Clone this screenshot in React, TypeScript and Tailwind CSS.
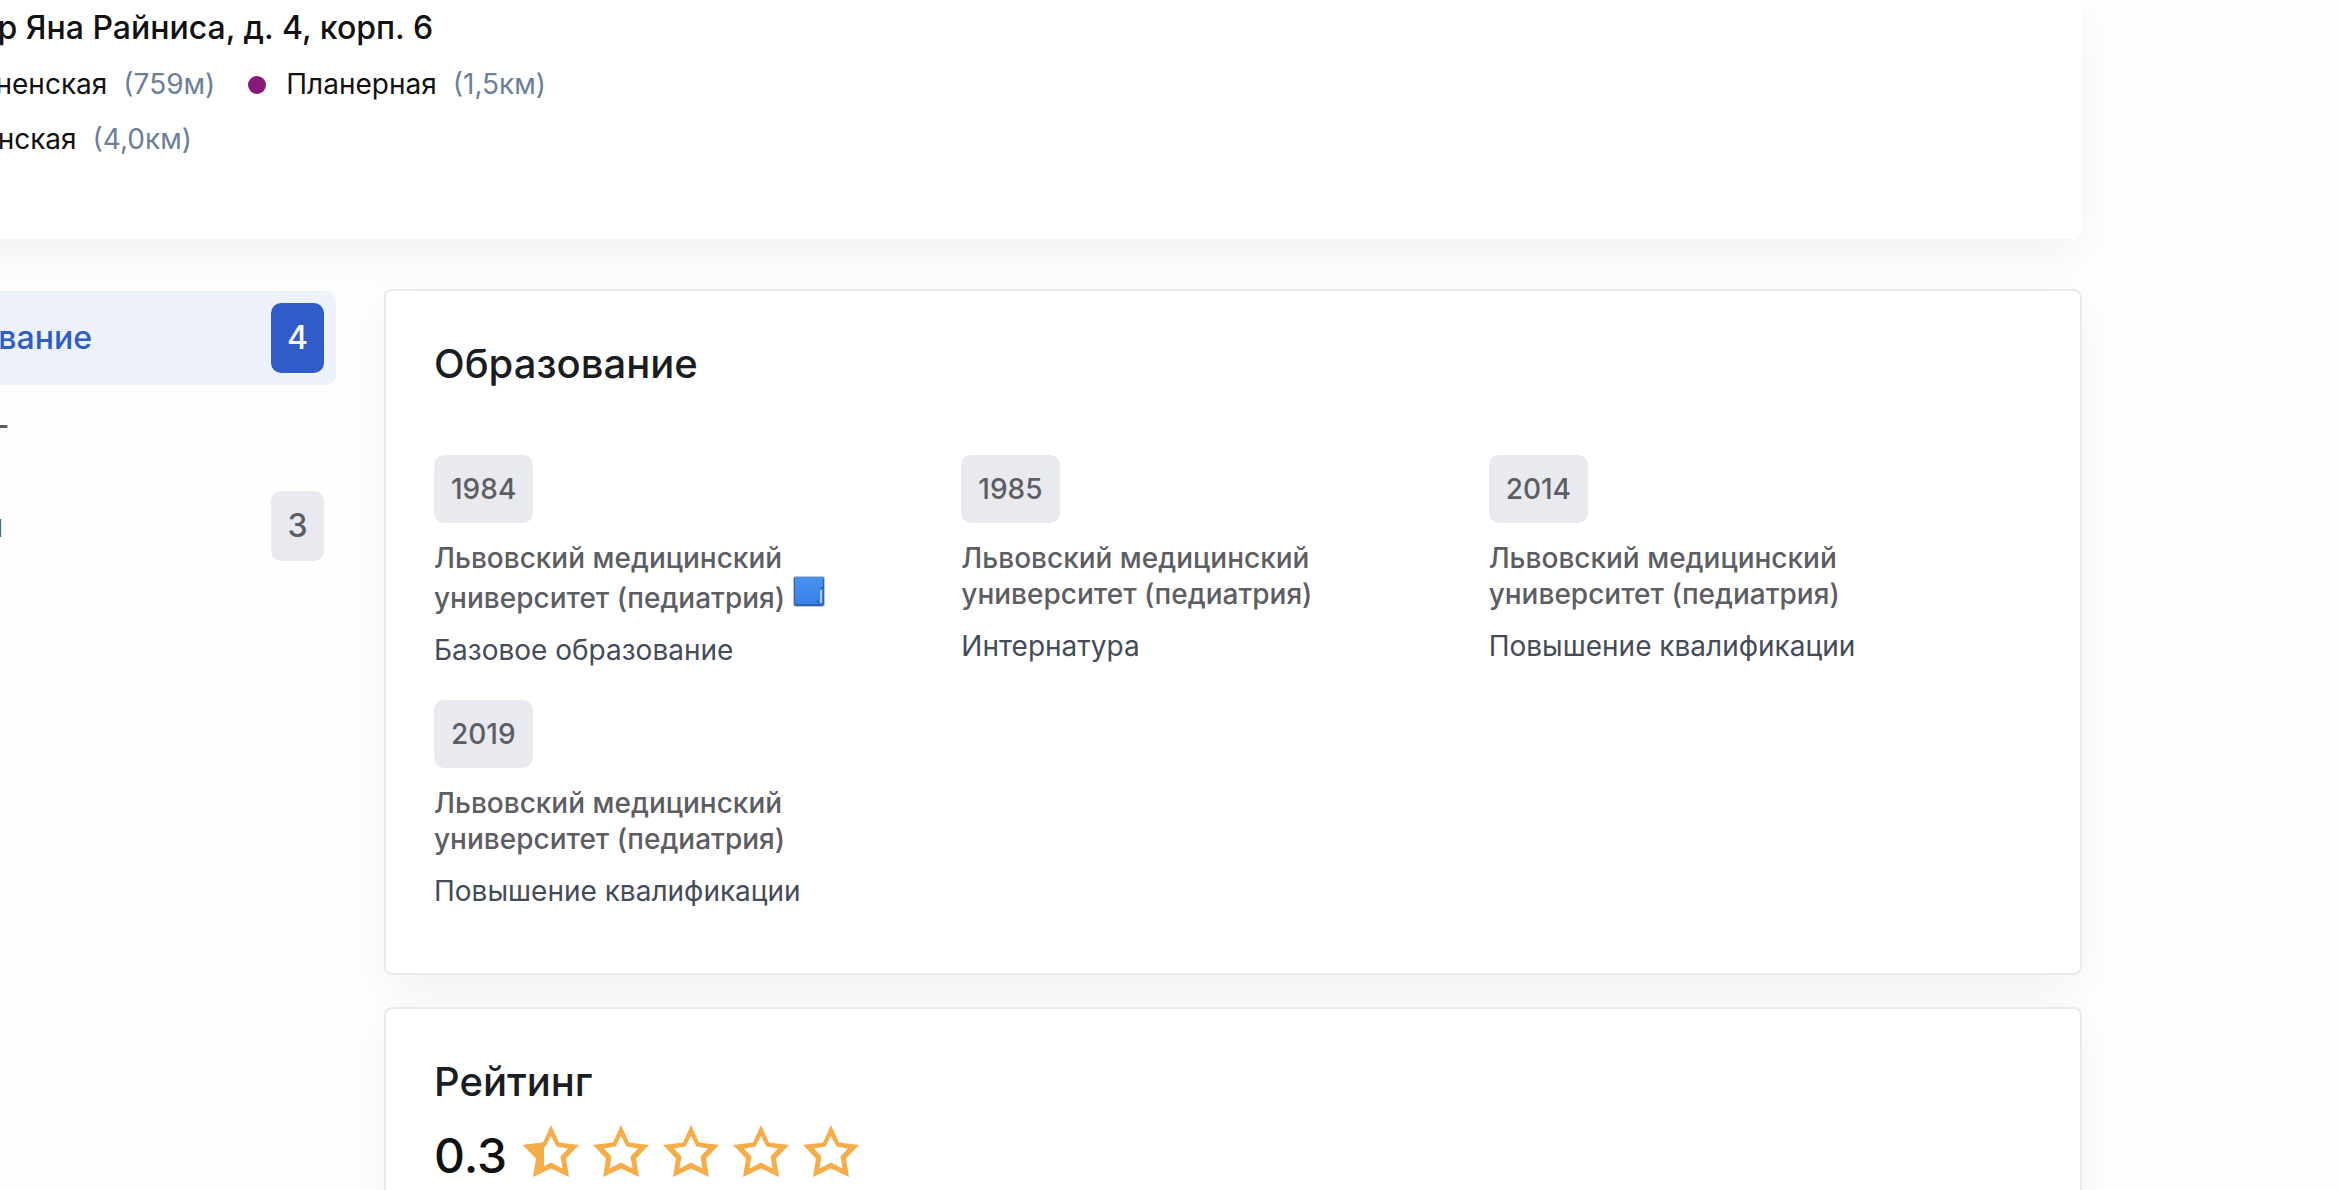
import clsx from "clsx";

const sections = [
  { title: "Образование", count: 4, active: true },
  { title: "Рейтинг", active: false },
  { title: "Отзывы", count: 3, active: false },
];

const education = [
  { year: "1984", kind: "Базовое образование", graduate: true },
  { year: "1985", kind: "Интернатура" },
  { year: "2014", kind: "Повышение квалификации" },
  { year: "2019", kind: "Повышение квалификации" },
];

function Station({ name, distance, color }: { name: string; distance: string; color: string }) {
  return (
    <li className="flex items-center">
      <span className={clsx("mr-5 size-[18px] rounded-full", color)} />
      {name}
      <span className="ml-4 text-[#6a7f99]">({distance})</span>
    </li>
  );
}

function BookIcon() {
  return (
    <svg className="ml-2 inline-block h-8 w-8 align-baseline" viewBox="0 0 32 32" aria-hidden="true">
      <defs>
        <linearGradient id="book" x1="0" y1="0" x2="0" y2="1">
          <stop offset="0" stopColor="#4a92ee" />
          <stop offset="1" stopColor="#3880ea" />
        </linearGradient>
      </defs>
      <rect x="0" y="0" width="32" height="31" rx="3" fill="#bcc6d4" />
      <rect x="1" y="1" width="30" height="29" rx="2" fill="#2d62b4" />
      <rect x="2" y="1" width="28" height="27" rx="2" fill="url(#book)" />
      <path d="M28 14v13" stroke="#a5c8f5" strokeWidth="2" />
      <path d="M26 26h-2M28 12h2" stroke="#2f5f9f" strokeWidth="2" />
    </svg>
  );
}

function Star({ half }: { half?: boolean }) {
  return (
    <svg className="h-[52px] w-14" viewBox="0 0 56 52" fill="#f4ad49" aria-hidden="true">
      <path
        fillRule="evenodd"
        d="M28 0 36 17.500 56 20 43 33.500 46 52 28 43.500 10 52 13 33.500 0 20 20 17.500ZM28 11 22.500 21.500 11 23.500 18.500 31.500 16.500 43.500 28 37.500 39.500 43.500 37.500 31.500 45 23.500 33.500 21.500Z"
      />
      {half && <path d="M0 20 21 17.500V42L14 44 13 33.500Z" />}
    </svg>
  );
}

function Card({ title, children }: { title: string; children: React.ReactNode }) {
  return (
    <section className="rounded-lg border-2 border-[#e9eaf0] bg-white px-12 pt-12 pb-8 shadow-[0_16px_48px_rgba(0,0,0,0.05)]">
      <h2 className="text-[40px] leading-[50px] font-medium text-[#1a1e22]">{title}</h2>
      {children}
    </section>
  );
}

export default function App() {
  return (
    <div className="h-screen overflow-hidden bg-[#fefefe] font-['Inter',sans-serif] text-[28px] text-[#111]">
      <div className="mr-[258px] -ml-[160px]">
        <header className="h-[239px] rounded-b-[10px] bg-white px-12 shadow-[0_16px_48px_rgba(0,0,0,0.05)]">
          <h1 className="pt-2 text-[32px] leading-10 font-medium">бульвар Яна Райниса, д. 4, корп. 6</h1>
          <ul className="mt-[9px] flex flex-wrap gap-x-[33px] leading-[55px]">
            <Station name="Сходненская" distance="759м" color="bg-[#851a79]" />
            <Station name="Планерная" distance="1,5км" color="bg-[#851a79]" />
            <li className="w-full" />
            <Station name="Тушинская" distance="4,0км" color="bg-[#851a79]" />
          </ul>
        </header>

        <div className="mt-[50px] flex items-start gap-12">
          <nav className="mt-[2px] w-[496px] shrink-0">
            {sections.map((s) => (
              <a
                key={s.title}
                href="#"
                className={clsx(
                  "flex h-[94px] items-center justify-between rounded-[10px] pr-3 pl-[41px] text-[32px] font-medium",
                  s.active ? "bg-[#edf1fa] text-[#2f5cc8]" : "text-[#5c5e64]"
                )}
              >
                {s.title}
                {s.count && (
                  <span
                    className={clsx(
                      "grid h-[70px] w-[53px] place-items-center rounded-[10px]",
                      s.active ? "bg-[#2f5cc8] text-white" : "bg-[#e9eaf0]"
                    )}
                  >
                    {s.count}
                  </span>
                )}
              </a>
            ))}
          </nav>

          <main className="flex min-w-0 flex-1 flex-col gap-8">
            <Card title="Образование">
              <ul className="mt-[66px] flex flex-wrap">
                {education.map((e) => (
                  <li key={e.year} className="w-[33%] pb-7">
                    <span className="inline-flex h-[68px] items-center rounded-[10px] bg-[#e9eaf0] px-[17px] align-top font-medium text-[#5c5e64]">
                      {e.year}
                    </span>
                    <p className="mt-[17px] leading-9 font-medium text-[#5c5e64]">
                      Львовский медицинский университет (педиатрия)
                      {e.graduate && <BookIcon />}
                    </p>
                    <p className="mt-3 leading-[44px] text-[#444c59]">{e.kind}</p>
                  </li>
                ))}
              </ul>
            </Card>

            <Card title="Рейтинг">
              <div className="mt-[18px] flex items-start gap-4">
                <span className="text-[48px] leading-[62px] font-medium">0.3</span>
                <div className="flex gap-[14px]">
                  {[0, 1, 2, 3, 4].map((i) => (
                    <Star key={i} half={i === 0} />
                  ))}
                </div>
              </div>
            </Card>
          </main>
        </div>
      </div>
    </div>
  );
}
